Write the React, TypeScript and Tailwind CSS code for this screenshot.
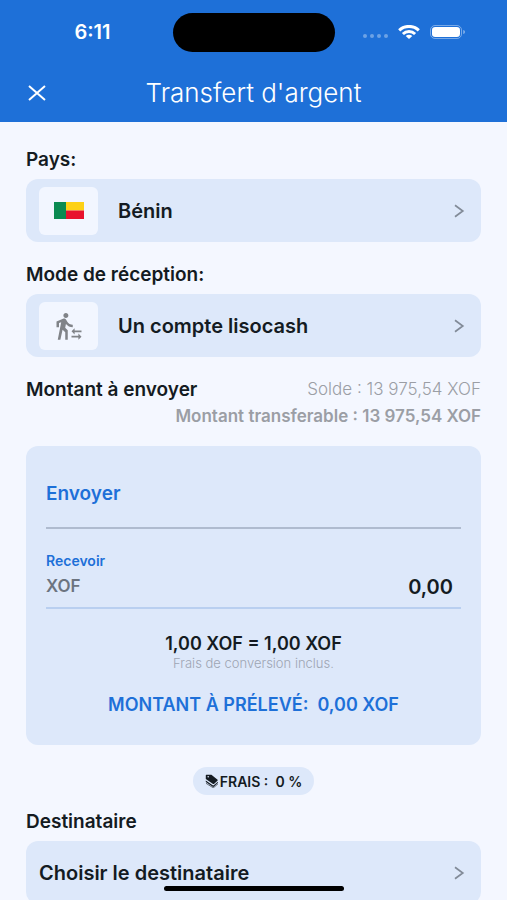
import { ReactNode, useState } from "react";
import { MdTransferWithinAStation } from "react-icons/md";

const style = {
  label: "text-[19px] font-semibold leading-6",
  card: "w-full rounded-xl bg-[#dde8fa]",
  tile: "flex h-12 w-[59px] items-center justify-center rounded-md bg-[#f2f6ff]",
  input: "min-w-0 flex-1 bg-transparent px-2 text-right text-[20px] font-semibold outline-none",
};

const StatusBar = () => {
  return (
    <div className="grid h-16 grid-cols-3 items-center">
      <p className="pl-4 text-center text-[20px] font-semibold leading-6">6:11</p>
      <div className="h-[39px] w-[162px] justify-self-center rounded-full bg-black" />
      <div className="flex items-center justify-center gap-[10px] pr-4">
        <div className="flex gap-[3px] pt-2">
          {[0, 1, 2, 3].map(dot => (
            <span key={dot} className="h-1 w-1 rounded-full bg-white/35" />
          ))}
        </div>
        <svg viewBox="0 0 22 14" className="h-[14px] w-[22px]" fill="none" stroke="white" strokeWidth="3">
          <path d="M1.2 5.3C6.6 .1 15.4 .1 20.8 5.3" />
          <path d="M4.9 9c3.4-3.2 8.8-3.2 12.2 0" />
          <path d="M11 14 7.7 11c1.9-1.6 4.7-1.6 6.6 0z" fill="white" stroke="none" />
        </svg>
        <svg viewBox="0 0 36 14" className="h-[14px] w-9" fill="none">
          <rect x=".5" y=".5" width="31" height="13" rx="4.5" stroke="white" strokeOpacity=".4" />
          <rect x="2" y="2" width="28" height="10" rx="3.2" fill="white" />
          <path d="M33.3 5v4c1-.4 1.6-1.1 1.6-2s-.6-1.6-1.6-2z" fill="white" fillOpacity=".5" />
        </svg>
      </div>
    </div>
  );
};

const ChevronIcon = () => {
  return (
    <svg viewBox="0 0 12 14" className="h-[14px] w-3 shrink-0" fill="none" stroke="#828b98" strokeWidth="1.7">
      <path d="M2 1.3 9.8 7 2 12.7" />
    </svg>
  );
};

const BeninFlag = () => {
  return (
    <svg viewBox="0 0 30 17" className="h-[17px] w-[30px]">
      <rect width="12" height="17" fill="#0b8a52" />
      <rect x="12" width="18" height="8.5" fill="#fdd116" />
      <rect x="12" y="8.5" width="18" height="8.5" fill="#e8112d" />
    </svg>
  );
};

const TagsIcon = () => {
  return (
    <svg viewBox="0 0 14 14" className="h-[14px] w-[14px]" fill="#141b22">
      <path
        fillRule="evenodd"
        d="M1.3 .8H6.4L12.3 5.4c.5.4.6 1 .1 1.4L9.2 9.7c-.4.4-1 .4-1.5.1L.8 5V1.3c0-.3.2-.5.5-.5zM3.2 2a.8.8 0 1 0 0 1.6.8.8 0 0 0 0-1.6z"
      />
      <path d="M.8 6.4 7.7 11.2c.4.3.9.3 1.3-.1L13 7.700v1.1L9 12.6c-.4.4-.9.4-1.3.1L.8 7.9z" />
      <path d="M1 9.3 7.7 13.5c.4.2.8.2 1.2-.1L13 9.8" fill="none" stroke="#141b22" strokeWidth=".6" />
    </svg>
  );
};

const SelectCard = ({ icon, text }: { icon?: ReactNode; text: string }) => {
  return (
    <button type="button" className={`${style.card} flex h-[63px] items-center pl-[13px] pr-4 text-left`}>
      {icon && <span className={`${style.tile} mr-5`}>{icon}</span>}
      <span className="flex-1 text-[20px] font-semibold leading-6">{text}</span>
      <ChevronIcon />
    </button>
  );
};

export default function App() {
  const [amount, setAmount] = useState("");

  return (
    <div className="flex h-screen flex-col bg-[#f4f7ff] font-['Inter',sans-serif] text-[#141b22]">
      <header className="shrink-0 bg-[#1e70d8] pb-[10px] text-white">
        <StatusBar />
        <div className="grid h-12 grid-cols-[48px_1fr_48px] items-center pt-[10px]">
          <button type="button" aria-label="Fermer" className="pl-7">
            <svg viewBox="0 0 18 16" className="h-4 w-[18px]" stroke="white" strokeWidth="2">
              <path d="M1 1l16 14M17 1 1 15" />
            </svg>
          </button>
          <h1 className="text-center text-[26px] font-light leading-8">Transfert d'argent</h1>
        </div>
      </header>

      <main className="flex-1 overflow-y-auto px-[26px] pb-12 pt-[26px] [scrollbar-width:none]">
        <h2 className={`${style.label} mb-[7px]`}>Pays:</h2>
        <SelectCard icon={<BeninFlag />} text="Bénin" />

        <h2 className={`${style.label} mb-[7px] mt-[21px]`}>Mode de réception:</h2>
        <SelectCard
          icon={<MdTransferWithinAStation className="h-[30px] w-[30px] text-[#808388]" />}
          text="Un compte lisocash"
        />

        <div className="mt-[19px] flex items-center justify-between">
          <label htmlFor="amount" className="text-[19px] font-semibold leading-[27px]">
            Montant à envoyer
          </label>
          <p className="text-[17px] font-light leading-[27px] text-[#9b9ea5]">Solde : 13 975,54 XOF</p>
        </div>
        <p className="text-right text-[17px] font-semibold leading-[27px] text-[#9b9ea5]">
          Montant transferable : 13 975,54 XOF
        </p>

        <section className={`${style.card} mt-4 px-5 pb-7 pt-4`}>
          <div className="flex h-[67px] items-center border-b-2 border-[#afbbcf]">
            <label htmlFor="amount" className="text-[19px] font-semibold text-[#1e70d8]">
              Envoyer
            </label>
            <input
              id="amount"
              inputMode="decimal"
              value={amount}
              onChange={e => setAmount(e.target.value)}
              className={style.input}
            />
          </div>
          <div className="mt-6 border-b-2 border-[#b9cff0] pb-[6px]">
            <label htmlFor="received" className="block text-[14px] font-semibold leading-4 text-[#1e70d8]">
              Recevoir
            </label>
            <div className="mt-1 flex h-7 items-center">
              <span className="text-[17px] font-semibold text-[#6c7480]">XOF</span>
              <input id="received" readOnly value="0,00" className={style.input} />
            </div>
          </div>
          <div className="mt-6 text-center">
            <p className="text-[18px] font-semibold leading-[22px]">1,00 XOF = 1,00 XOF</p>
            <p className="text-[13px] font-light leading-4 text-[#9da5b3]">Frais de conversion inclus.</p>
            <p className="mt-[22px] whitespace-pre text-[18px] font-semibold leading-6 text-[#1e70d8]">
              MONTANT À PRÉLEVÉ:{"  "}0,00 XOF
            </p>
          </div>
        </section>

        <div className="mx-auto mt-[22px] flex h-7 w-fit items-center gap-px rounded-full bg-[#dde8fa] px-3">
          <TagsIcon />
          <p className="whitespace-pre text-[14px] font-semibold">FRAIS :{"  "}0 %</p>
        </div>

        <h2 className={`${style.label} mb-[7px] mt-[15px]`}>Destinataire</h2>
        <SelectCard text="Choisir le destinataire" />
      </main>

      <div className="fixed inset-x-0 bottom-[9px] mx-auto h-[5px] w-[180px] rounded-full bg-black" />
    </div>
  );
}
